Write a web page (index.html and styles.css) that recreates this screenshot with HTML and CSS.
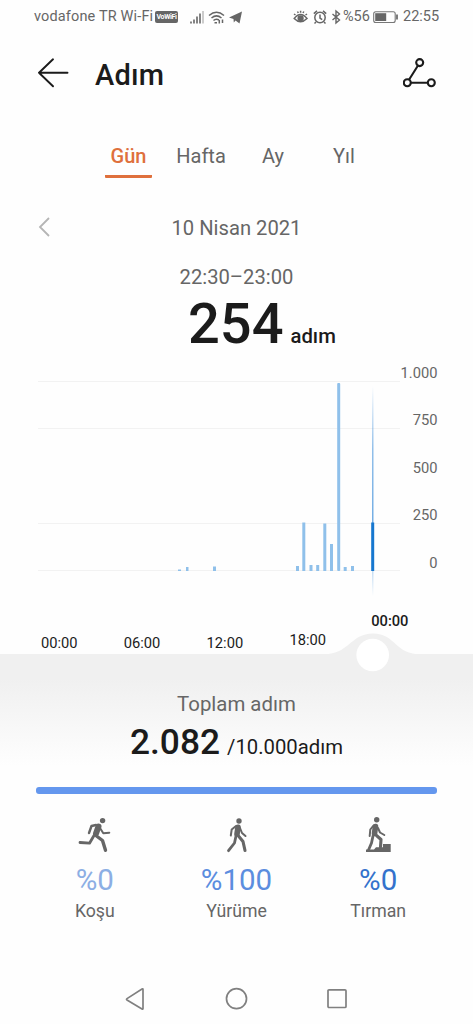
FILE: index.html
```html
<!DOCTYPE html>
<html lang="tr">
<head>
<meta charset="utf-8">
<title>Adım</title>
<link rel="stylesheet" href="styles.css">
</head>
<body>
<div class="screen">
  <div class="status">
    <span class="carrier">vodafone TR Wi-Fi</span>
    <span class="vowifi">VoWiFi</span>
    <svg class="signals" width="54" height="16" viewBox="0 0 54 16" fill="none" stroke="#666">
      <path d="M1 12.5v2M4 10.5v4M7 7.5v7M10 4.5v10" stroke-width="1.6"/><path d="M13 2v12.500" stroke="#aaa" stroke-width="1.200"/>
      <path d="M19 6.500q7.500-6.500 15 0M21.500 9q5-4.300 10 0M23.500 11.500q2.500-2.300 5.500-.5" stroke-width="1.500"/>
      <path d="M24.500 13.700h2.500M29.300 11v3.500M32.500 10.500v3.500" stroke-width="1.500"/>
      <path d="M52 2.500L49.500 14.500 45.500 11.500 43.800 13.500 43.500 10 39 8.500Z" fill="#666" stroke="none"/>
    </svg>
    <span class="spacer"></span>
    <svg class="indicators" width="48" height="16" viewBox="0 0 48 16" fill="none" stroke="#666" stroke-width="1.500">
      <path d="M1.200 9.500Q7.500 1.500 14 9.500Q7.500 16 1.200 9.500ZM1 5l1.500 1M14 5l-1.500 1M4.500 2.500l.8 1.500M7.600 1.800v2M10.800 2.500L10 4"/><circle cx="7.600" cy="9.300" r="2.400" fill="#666"/>
      <circle cx="27" cy="8.500" r="5.200"/><path d="M27 5.500v3.500l2.200 1.600M20.800 4.600l3.200-2.700M33.200 4.600L30 1.900M23 13l-1.500 1.500M31 13l1.500 1.500"/>
      <path d="M39.500 5l7 6-3.500 3V2l3.500 3-7 6" stroke-width="1.400"/>
    </svg>
    <span class="charge">%56</span>
    <svg class="battery" width="26" height="14" viewBox="0 0 26 14"><rect x=".7" y="1.700" width="21.500" height="10.800" rx="2" fill="none" stroke="#777" stroke-width="1.100"/><path d="M2.200 3.200h11v7.800h-11z" fill="#666"/><path d="M24 4.500v5" stroke="#666" stroke-width="1.700"/></svg>
    <span class="clock">22:55</span>
  </div>

  <header class="header">
    <svg width="32" height="32" viewBox="0 1.700 32 32" fill="none" stroke="#1b1b1b" stroke-width="1.900" stroke-linecap="round" stroke-linejoin="round"><path d="M30.500 16.500H2M16 3L2 16.500 16 30"/></svg>
    <h1 class="title">Adım</h1>
    <svg width="34" height="32" viewBox="1 .7 34 32" fill="none" stroke="#1b1b1b" stroke-width="2.100"><circle cx="17.700" cy="5.300" r="3.500"/><circle cx="5.300" cy="25.400" r="3.500"/><circle cx="29.300" cy="25.400" r="3.500"/><path d="M16 8.200L7 22.500M8.600 25.400H26"/></svg>
  </header>

  <nav class="tabs">
    <span class="tab active">Gün</span><span class="tab">Hafta</span><span class="tab">Ay</span><span class="tab">Yıl</span>
  </nav>

  <div class="date">
    <svg width="14" height="22" viewBox="0 0 14 22" fill="none" stroke="#b5b5b5" stroke-width="1.800"><path d="M12 2L3 11l9 9"/></svg>
    <span class="day">10 Nisan 2021</span>
  </div>

  <div class="range">22:30–23:00</div>
  <div class="current"><span class="steps">254</span><span class="unit">adım</span></div>

  <div class="chart">
    <svg width="364" height="240" viewBox="36 360 364 240">
      <defs><linearGradient id="cursor" x1="0" y1="0" x2="0" y2="1"><stop offset="0" stop-color="#4b96dc" stop-opacity="0"/><stop offset=".3" stop-color="#4b96dc" stop-opacity=".75"/><stop offset=".7" stop-color="#4b96dc"/><stop offset="1" stop-color="#4b96dc" stop-opacity="0"/></linearGradient></defs>
      <path d="M38 381.500h362M38 428.500h362M38 523.500h362M38 570.500h362" stroke="#f2f2f2"/>
      <g fill="#8fc0ea">
        <rect x="178" y="569.500" width="3" height="1.500"/><rect x="186" y="567" width="2.500" height="4"/><rect x="213" y="566.500" width="3" height="4.500"/>
        <rect x="296" y="566" width="3" height="5"/><rect x="302.300" y="522.500" width="3" height="48.500"/><rect x="309.500" y="565" width="3" height="6"/><rect x="316.200" y="565" width="3" height="6"/>
        <rect x="323.300" y="523.500" width="3" height="47.500"/><rect x="330" y="544" width="3" height="27"/><rect x="337.200" y="383" width="3" height="188" rx="1"/><rect x="343.700" y="567" width="3" height="4"/><rect x="351" y="566" width="3" height="5"/>
      </g>
      <rect x="372.200" y="386" width="1.200" height="210" fill="url(#cursor)"/>
      <rect x="371.200" y="522.500" width="3" height="48.500" fill="#1677cf"/>
    </svg>
    <div class="scale"><span>1.000</span><span>750</span><span>500</span><span>250</span><span>0</span></div>
  </div>

  <div class="hours">
    <span>00:00</span><span>06:00</span><span>12:00</span><span class="evening">18:00</span><span class="selected">00:00</span>
  </div>

  <section class="total">
    <svg class="handle" width="100" height="42" viewBox="322 632 100 42"><path d="M322 654.500C350 654.500 350 633.500 373 633.500S394 654.500 422 654.500Z" fill="#f0f0f0"/><circle cx="372.700" cy="655" r="16.300" fill="#fff"/></svg>
    <div class="total-label">Toplam adım</div>
    <div class="total-value"><span class="sum">2.082</span><span class="goal">/10.000adım</span></div>
    <div class="progress"></div>
  </section>

  <div class="kinds">
    <div class="kind">
      <svg width="34" height="36" viewBox="78 817 34 36" fill="none" stroke="#666" stroke-linecap="round" stroke-linejoin="round"><circle cx="102.600" cy="820.600" r="2.700" fill="#666" stroke="none"/><path d="M98.500 826.500L96 833.500" stroke-width="6"/><path d="M96 825L91.500 826 89 833" stroke-width="2.400"/><path d="M100 828L103.300 833.300 109.300 832.700" stroke-width="2"/><path d="M94 835.500L89.500 843.200 80 842.500" stroke-width="2.800"/><path d="M96.500 836L102.500 840.500 105.500 850.300" stroke-width="3.400"/></svg>
      <strong class="pct light">%0</strong><span>Koşu</span>
    </div>
    <div class="kind">
      <svg width="34" height="36" viewBox="219.500 817 34 36" fill="none" stroke="#666" stroke-linecap="round" stroke-linejoin="round"><circle cx="238.500" cy="821" r="2.700" fill="#666" stroke="none"/><path d="M237.500 827.300L236.500 834" stroke-width="5.600"/><path d="M235.500 826L231.200 829.500 230.300 835.500M239.500 828L241.500 833 245 836" stroke-width="2"/><path d="M235.500 836L234 843 228 850.700" stroke-width="2.800"/><path d="M238 836L242.500 841.500 244.500 850.500" stroke-width="3.100"/></svg>
      <strong class="pct mid">%100</strong><span>Yürüme</span>
    </div>
    <div class="kind">
      <svg width="34" height="36" viewBox="361 817 34 36" fill="none" stroke="#666" stroke-linecap="round" stroke-linejoin="round"><circle cx="376.700" cy="819.700" r="2.700" fill="#666" stroke="none"/><path d="M375.500 826.500L374.500 833.500" stroke-width="5.600"/><path d="M373.500 825.500L370.300 829.500 369.700 836M378 828L380 832.500 384.300 835" stroke-width="2"/><path d="M373 836L371.500 843 368.500 850" stroke-width="2.800"/><path d="M376.500 835.500L381 839.500 380.500 847" stroke-width="3.100"/><path d="M366 849.500H374L376 847.200H383V844H390.700V852H366Z" fill="#666" stroke="none"/></svg>
      <strong class="pct deep">%0</strong><span>Tırman</span>
    </div>
  </div>

  <div class="navbar">
    <svg width="22" height="24" viewBox="0 0 22 24"><path d="M18 2.500V21.500Q18 22.500 17 22L2 13Q1 12.300 2 11.600L17 2Q18 1.500 18 2.500Z"/></svg>
    <svg width="24" height="24" viewBox="0 0 24 24"><circle cx="11.500" cy="11.700" r="10"/></svg>
    <svg width="22" height="24" viewBox="0 0 22 24"><rect x="2" y="2.800" width="18" height="17.700" rx="1"/></svg>
  </div>
</div>
</body>
</html>
```
FILE: styles.css
```css
* { box-sizing: border-box; }
body { margin: 0; background: #fefefe; font-family: Roboto, sans-serif; color: #666; }
.screen { width: 473px; height: 1024px; display: flex; flex-direction: column; overflow: hidden; }
.status { height: 32px; flex: none; display: flex; align-items: center; padding: 1px 34px 0; font-size: 14.5px; line-height: 31px; white-space: nowrap; }
.carrier { width: 121px; letter-spacing: .15px; }
.vowifi { width: 23px; height: 12px; background: #666; color: #fff; border-radius: 2px; font-size: 7px; line-height: 12px; font-weight: 700; text-align: center; letter-spacing: -.3px; }
.signals { margin-left: 12px; }
.spacer { flex: 1; }
.indicators { margin-right: 2px; }
.charge { width: 27px; }
.battery { margin: 0 4px 0 3px; }
.clock { width: 36px; }
.header { height: 84px; flex: none; display: flex; align-items: center; padding: 0 36px 0 37px; }
.title { margin: 2px auto 0 26px; font-size: 29px; line-height: 36px; font-weight: 500; color: #1b1b1b; letter-spacing: .2px; }
.tabs { height: 63px; flex: none; display: flex; padding: 20px 0 0 105px; font-size: 20px; line-height: 41px; }
.tab { height: 42px; width: 47px; text-align: center; }
.tab.active { font-weight: 500; color: #df703c; border-bottom: 3px solid #df703c; border-radius: 1px; }
.tab:nth-child(2) { width: 50px; margin-left: 24px; }
.tab:nth-child(3) { width: 24px; margin-left: 35px; }
.tab:nth-child(4) { width: 24px; margin-left: 47px; }
.date { height: 74px; flex: none; padding: 32px 37px 0; display: flex; }
.date svg { margin-top: 5px; flex: none; }
.day { flex: 1; line-height: 34px; font-size: 20.2px; text-align: center; padding-right: 14px; }
.range { height: 34px; flex: none; margin-top: 7px; line-height: 34px; font-size: 20.2px; text-align: center; }
.current { height: 66px; flex: none; display: flex; align-items: baseline; padding-left: 188px; color: #1b1b1b; font-weight: 500; line-height: 60px; }
.steps { font-size: 56px; }
.unit { font-size: 20.3px; margin-left: 7px; }
.chart { height: 240px; flex: none; display: flex; padding-left: 36px; }
.chart svg { flex: none; }
.scale { width: 37.500px; display: flex; flex-direction: column; font-size: 14.7px; line-height: 47.4px; text-align: right; margin-top: -10px; }
.scale span { white-space: nowrap; }
.hours { height: 54px; flex: none; display: flex; padding: 33px 0 0 41px; font-size: 14.7px; line-height: 20px; color: #1b1b1b; }
.hours span { width: 37px; margin-right: 45.800px; }
.hours .evening { margin-top: -3px; }
.hours .selected { margin: -22px 0 0 -1px; font-weight: 500; }
.total { position: relative; height: 160px; flex: none; padding: 33px 36px 0; background: linear-gradient(#f0f0f0 0, #f0f0f0 25px, #fefefe 112px); }
.handle { position: absolute; left: 322px; top: -22px; }
.total-label { height: 34px; line-height: 34px; font-size: 20.4px; text-align: center; }
.total-value { height: 66px; display: flex; align-items: baseline; padding-left: 94px; line-height: 43px; color: #1b1b1b; }
.sum { font-size: 35.3px; font-weight: 500; }
.goal { font-size: 20.3px; margin-left: 7px; }
.progress { height: 6.5px; border-radius: 3px; background: #6497ee; }
.kinds { display: flex; flex: none; height: 159px; padding: 3px 24px 0; }
.kind { width: 141.700px; display: flex; flex-direction: column; align-items: center; font-size: 17.700px; line-height: 23px; }
.pct { font-size: 29.5px; line-height: 36px; font-weight: 400; margin: 9px 0 2px; }
.light { color: #8caee4; }
.mid { color: #5b8ddf; }
.deep { color: #3472cc; }
.navbar { display: flex; padding: 14px 125px 0; justify-content: space-between; }
.navbar svg { fill: none; stroke: #808080; stroke-width: 1.700; }
```
